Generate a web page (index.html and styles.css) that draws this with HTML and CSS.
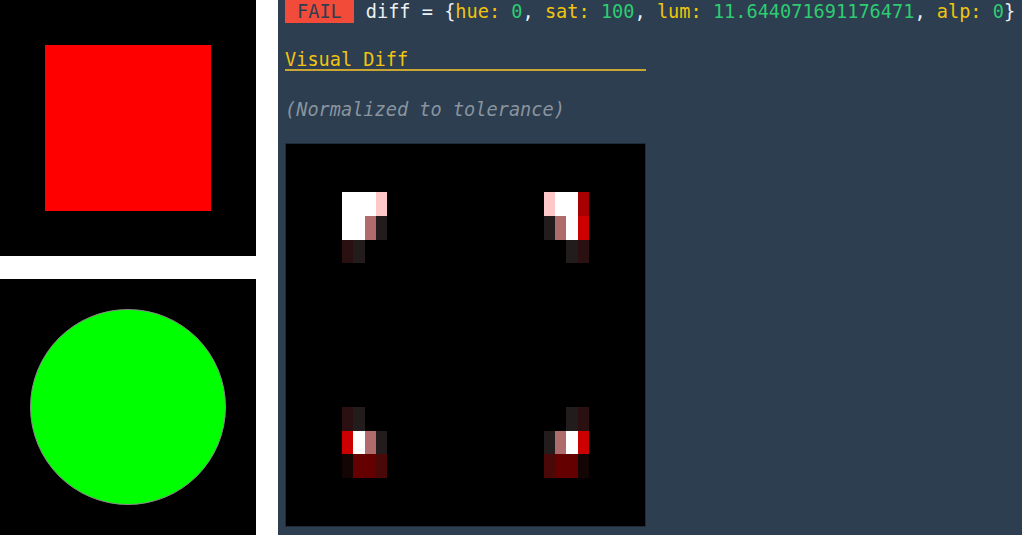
FILE: index.html
```html
<!DOCTYPE html>
<html>
<head>
<meta charset="utf-8">
<link rel="stylesheet" href="styles.css">
</head>
<body>
<div class="page">
  <div class="samples">
    <div class="sample"><div class="square"></div></div>
    <div class="sample"><div class="circle"></div></div>
  </div>
  <div class="report">
    <div class="status">
      <span class="badge">FAIL</span>
      <span class="summary">diff = {<span class="key">hue:</span> <span class="num">0</span>, <span class="key">sat:</span> <span class="num">100</span>, <span class="key">lum:</span> <span class="num">11.644071691176471</span>, <span class="key">alp:</span> <span class="num">0</span>}</span>
    </div>
    <div class="title">Visual Diff</div>
    <div class="note">(Normalized to tolerance)</div>
    <div class="diff">
      <svg class="diff-img" viewBox="0 0 32 16" preserveAspectRatio="none" shape-rendering="crispEdges">
        <rect x="0" y="0" width="32" height="16" fill="#000"/>
        <!-- top-left -->
        <rect x="5" y="2" width="3" height="1" fill="#fff"/>
        <rect x="8" y="2" width="1" height="1" fill="#ffc8c8"/>
        <rect x="5" y="3" width="2" height="1" fill="#fff"/>
        <rect x="7" y="3" width="1" height="1" fill="#b06c6c"/>
        <rect x="8" y="3" width="1" height="1" fill="#221c1c"/>
        <rect x="5" y="4" width="1" height="1" fill="#2a1010"/>
        <rect x="6" y="4" width="1" height="1" fill="#221c1c"/>
        <!-- top-right -->
        <rect x="23" y="2" width="1" height="1" fill="#ffc8c8"/>
        <rect x="24" y="2" width="2" height="1" fill="#fff"/>
        <rect x="26" y="2" width="1" height="1" fill="#a80000"/>
        <rect x="23" y="3" width="1" height="1" fill="#221c1c"/>
        <rect x="24" y="3" width="1" height="1" fill="#b06c6c"/>
        <rect x="25" y="3" width="1" height="1" fill="#fff"/>
        <rect x="26" y="3" width="1" height="1" fill="#cc0000"/>
        <rect x="25" y="4" width="1" height="1" fill="#221c1c"/>
        <rect x="26" y="4" width="1" height="1" fill="#2a1010"/>
        <!-- bottom-left -->
        <rect x="5" y="11" width="1" height="1" fill="#2a1010"/>
        <rect x="6" y="11" width="1" height="1" fill="#221c1c"/>
        <rect x="5" y="12" width="1" height="1" fill="#cc0000"/>
        <rect x="6" y="12" width="1" height="1" fill="#fff"/>
        <rect x="7" y="12" width="1" height="1" fill="#b06c6c"/>
        <rect x="8" y="12" width="1" height="1" fill="#221c1c"/>
        <rect x="5" y="13" width="1" height="1" fill="#140505"/>
        <rect x="6" y="13" width="2" height="1" fill="#640000"/>
        <rect x="8" y="13" width="1" height="1" fill="#4a0808"/>
        <!-- bottom-right -->
        <rect x="25" y="11" width="1" height="1" fill="#221c1c"/>
        <rect x="26" y="11" width="1" height="1" fill="#2a1010"/>
        <rect x="23" y="12" width="1" height="1" fill="#221c1c"/>
        <rect x="24" y="12" width="1" height="1" fill="#b06c6c"/>
        <rect x="25" y="12" width="1" height="1" fill="#fff"/>
        <rect x="26" y="12" width="1" height="1" fill="#cc0000"/>
        <rect x="23" y="13" width="1" height="1" fill="#4a0808"/>
        <rect x="24" y="13" width="2" height="1" fill="#640000"/>
        <rect x="26" y="13" width="1" height="1" fill="#140505"/>
      </svg>
    </div>
  </div>
</div>
</body>
</html>
```

FILE: styles.css
```css
html, body {
  margin: 0;
  padding: 0;
  background: #ffffff;
}

.page {
  display: flex;
  width: 1022px;
  height: 535px;
  overflow: hidden;
}

.samples {
  display: flex;
  flex-direction: column;
  gap: 23px;
  width: 256px;
  flex: none;
}

.sample {
  width: 256px;
  height: 256px;
  background: #000;
  display: flex;
  align-items: center;
  justify-content: center;
}

.square {
  width: 166px;
  height: 166px;
  background: #ff0000;
}

.circle {
  width: 194px;
  height: 194px;
  border-radius: 50%;
  background: #00ff00;
  border: 1px solid #8a8a8a;
}

.report {
  margin-left: 22px;
  flex: 1;
  background: #2c3e50;
  padding-left: 7px;
  font-family: "DejaVu Sans Mono", monospace;
  font-size: 18.6px;
  color: #ecf0f1;
}

.status {
  display: flex;
  align-items: center;
  height: 23px;
  white-space: nowrap;
}

.badge {
  display: inline-flex;
  align-items: center;
  height: 23px;
  padding: 0 12px;
  background: #f24b3a;
  color: #2c3e50;
  margin-right: 12px;
}

.key {
  color: #f1c40f;
}

.num {
  color: #2ecc71;
}

.title {
  margin-top: 28px;
  width: 361px;
  line-height: 18px;
  color: #f1c40f;
  border-bottom: 2px solid #c9a531;
}

.note {
  margin-top: 24px;
  line-height: 30px;
  font-style: italic;
  color: #8a949e;
}

.diff {
  margin-top: 18px;
  width: 359px;
  height: 382px;
  border: 1px solid #1f2b38;
  background: #000;
}

.diff-img {
  display: block;
  width: 359px;
  height: 382px;
}
```
